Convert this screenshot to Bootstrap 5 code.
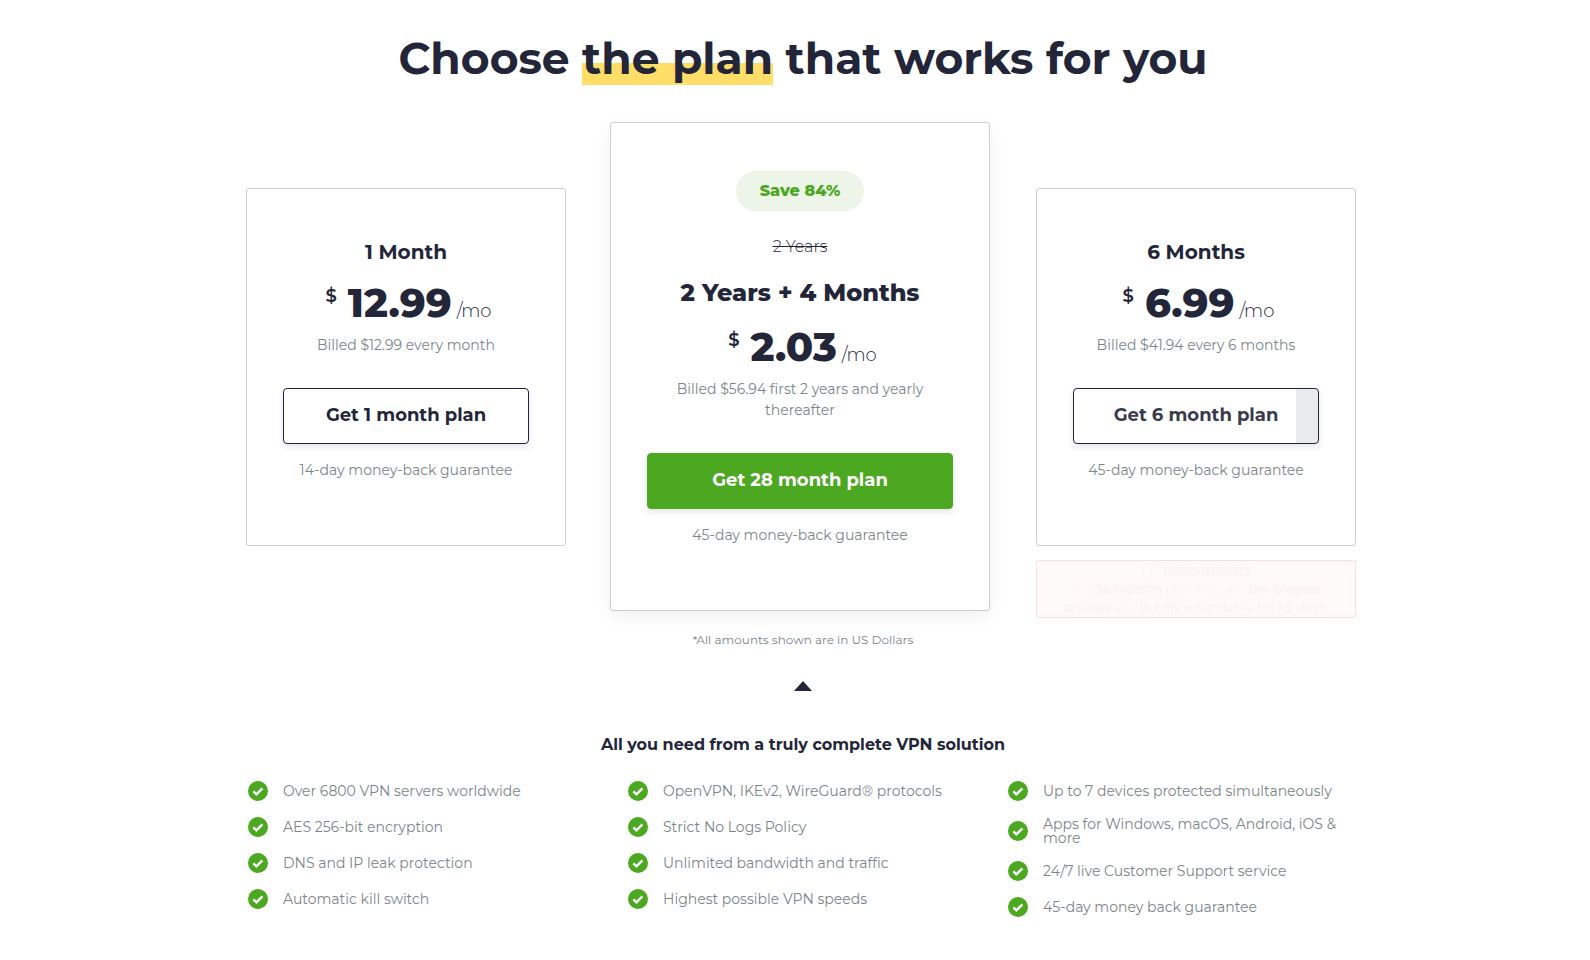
<!DOCTYPE html>
<html lang="en">
<head>
<meta charset="utf-8">
<meta name="viewport" content="width=device-width, initial-scale=1">
<title>Choose the plan that works for you</title>
<link href="https://cdn.jsdelivr.net/npm/bootstrap@5.3.0/dist/css/bootstrap.min.css" rel="stylesheet">
<style>
:root { --ink: #232539; --muted: #7b858a; --green: #4ba820; --line: #cdced2; }
body { font-family: Montserrat, Inter, "Open Sans", sans-serif; color: var(--ink); background: #fff; padding-left: 16px; }
.page-title { font-size: 44px; line-height: 54px; font-weight: 700; padding-top: 31px; margin-bottom: 37px; }
.highlight { display: inline-block; background: linear-gradient(#fede66, #fede66) 0 32px / 100% 22px no-repeat; }
.pricing { max-width: 1140px; padding-left: 13px; padding-right: 17px; }
.plans { column-gap: 44px; }
.plan-col { flex: 0 1 320px; }
.plan-col-side { padding-top: 66px; }
.plan-col-featured { flex-basis: 380px; }
.plan { border: 1px solid var(--line); border-radius: 3px; padding: 48px 36px 64px; text-align: center; }
.plan-featured { box-shadow: 0 6px 18px rgba(0,0,0,.06); }
.plan-name { font-size: 20px; line-height: 30px; font-weight: 700; margin-bottom: 12px; }
.plan-featured .plan-name { font-size: 24px; line-height: 36px; font-weight: 800; }
.plan-price { line-height: 48px; height: 48px; padding-left: 5px; }
.currency { font-size: 18px; line-height: 24px; font-weight: 600; margin: 5px 11px 0 0; align-self: flex-start; }
.amount { font-size: 40px; font-weight: 800; }
.period { font-size: 18px; font-weight: 300; margin-left: 5px; }
.fine { font-size: 14px; line-height: 21px; color: var(--muted); }
.fine-billed { margin: 8px 0 32px; }
.save-pill { background: #edf5e9; color: var(--green); font-size: 16px; line-height: 24px; font-weight: 800; padding: 8px 24px; }
.was { font-size: 16px; line-height: 24px; font-weight: 300; }
.btn-plan { font-size: 18px; line-height: 24px; font-weight: 700; height: 56px; padding-bottom: 8px; border-radius: 4px; box-shadow: 0 3px 6px rgba(0,0,0,.1);
  --bs-btn-color: var(--ink); --bs-btn-border-color: var(--ink); --bs-btn-bg: #fff; }
.btn-featured { --bs-btn-color: #fff; --bs-btn-border-color: var(--green); --bs-btn-bg: var(--green); }
.btn-sweep { --bs-btn-color: #393b4d; background: linear-gradient(90deg, #fff 91%, #e9eaec 91%) 0 0 / 100% 100% no-repeat; }
.notice { border: 1px solid #f9dfdf; border-radius: 3px; background: #fffafa; color: #fcf4f4; font-size: 12px; line-height: 18px; padding: 0 20px; margin-top: 14px; }
.notice-title { font-size: 13px; line-height: 20px; font-weight: 700; }
.currency-note { font-size: 12px; line-height: 18px; color: var(--muted); margin-top: 13px; }
.arrow-up { display: block; margin: 32px auto 41px; color: var(--ink); }
.features-title { font-size: 16px; line-height: 26px; font-weight: 700; margin-bottom: 23px; }
.features { max-width: 1140px; }
.feature-list { padding-left: 15px; padding-right: 15px; margin-bottom: 0; }
.feature { font-size: 14px; line-height: 14px; color: var(--muted); gap: 15px; margin-bottom: 16px; }
.tick { flex: none; color: var(--green); }
</style>
</head>
<body>
<svg class="d-none"><symbol id="tick" viewBox="0 0 20 20"><circle cx="10" cy="10" r="10" fill="currentColor"/><path d="M5.4 10.3l3 3 6-6" fill="none" stroke="#fff" stroke-width="2.4"/></symbol></svg>
<main>
  <h1 class="page-title text-center">Choose <span class="highlight">the plan</span> that works for you</h1>
  <section class="pricing mx-auto">
    <div class="plans d-flex align-items-start">
      <div class="plan-col plan-col-side">
        <article class="plan">
          <h2 class="plan-name">1 Month</h2>
          <div class="plan-price d-flex justify-content-center align-items-baseline"><span class="currency">$</span><span class="amount">12.99</span><span class="period">/mo</span></div>
          <p class="fine fine-billed">Billed $12.99 every month</p>
          <button type="button" class="btn btn-plan w-100">Get 1 month plan</button>
          <p class="fine mt-3 mb-0">14-day money-back guarantee</p>
        </article>
      </div>
      <div class="plan-col plan-col-featured">
        <article class="plan plan-featured">
          <span class="save-pill d-inline-block rounded-pill">Save 84%</span>
          <p class="was mt-4 mb-3"><s>2 Years</s></p>
          <h2 class="plan-name">2 Years + 4 Months</h2>
          <div class="plan-price d-flex justify-content-center align-items-baseline"><span class="currency">$</span><span class="amount">2.03</span><span class="period">/mo</span></div>
          <p class="fine fine-billed">Billed $56.94 first 2 years and yearly thereafter</p>
          <button type="button" class="btn btn-plan btn-featured w-100">Get 28 month plan</button>
          <p class="fine mt-3 mb-0">45-day money-back guarantee</p>
        </article>
      </div>
      <div class="plan-col plan-col-side ms-auto">
        <article class="plan">
          <h2 class="plan-name">6 Months</h2>
          <div class="plan-price d-flex justify-content-center align-items-baseline"><span class="currency">$</span><span class="amount">6.99</span><span class="period">/mo</span></div>
          <p class="fine fine-billed">Billed $41.94 every 6 months</p>
          <button type="button" class="btn btn-plan btn-sweep w-100">Get 6 month plan</button>
          <p class="fine mt-3 mb-0">45-day money-back guarantee</p>
        </article>
        <div class="notice text-center">
          <div class="notice-title d-flex justify-content-center align-items-center gap-1">
            <svg width="17" height="17" viewBox="0 0 16 16" fill="none" stroke="currentColor"><circle cx="8" cy="8" r="7.4"/><path d="M8 7v5M8 4v1.4"/></svg>
            <span>IMPORTANT!</span>
          </div>
          The <strong>26 MONTH</strong> plan includes <strong>the biggest</strong> <strong>savings</strong> and <strong>is fully refundable for 45 days.</strong>
        </div>
      </div>
    </div>
  </section>
  <p class="currency-note text-center mb-0">*All amounts shown are in US Dollars</p>
  <svg class="arrow-up" width="18" height="10" viewBox="0 0 18 10"><path d="M0 10L9 0l9 10z" fill="currentColor"/></svg>
  <section class="features mx-auto">
    <h2 class="features-title text-center">All you need from a truly complete VPN solution</h2>
    <div class="row g-0">
      <ul class="feature-list list-unstyled col-4">
        <li class="feature d-flex align-items-center"><svg class="tick" width="20" height="20"><use href="#tick"/></svg>Over 6800 VPN servers worldwide</li>
        <li class="feature d-flex align-items-center"><svg class="tick" width="20" height="20"><use href="#tick"/></svg>AES 256-bit encryption</li>
        <li class="feature d-flex align-items-center"><svg class="tick" width="20" height="20"><use href="#tick"/></svg>DNS and IP leak protection</li>
        <li class="feature d-flex align-items-center"><svg class="tick" width="20" height="20"><use href="#tick"/></svg>Automatic kill switch</li>
      </ul>
      <ul class="feature-list list-unstyled col-4">
        <li class="feature d-flex align-items-center"><svg class="tick" width="20" height="20"><use href="#tick"/></svg>OpenVPN, IKEv2, WireGuard® protocols</li>
        <li class="feature d-flex align-items-center"><svg class="tick" width="20" height="20"><use href="#tick"/></svg>Strict No Logs Policy</li>
        <li class="feature d-flex align-items-center"><svg class="tick" width="20" height="20"><use href="#tick"/></svg>Unlimited bandwidth and traffic</li>
        <li class="feature d-flex align-items-center"><svg class="tick" width="20" height="20"><use href="#tick"/></svg>Highest possible VPN speeds</li>
      </ul>
      <ul class="feature-list list-unstyled col-4">
        <li class="feature d-flex align-items-center"><svg class="tick" width="20" height="20"><use href="#tick"/></svg>Up to 7 devices protected simultaneously</li>
        <li class="feature d-flex align-items-center"><svg class="tick" width="20" height="20"><use href="#tick"/></svg>Apps for Windows, macOS, Android, iOS &amp; more</li>
        <li class="feature d-flex align-items-center"><svg class="tick" width="20" height="20"><use href="#tick"/></svg>24/7 live Customer Support service</li>
        <li class="feature d-flex align-items-center"><svg class="tick" width="20" height="20"><use href="#tick"/></svg>45-day money back guarantee</li>
      </ul>
    </div>
  </section>
</main>
<script src="https://cdn.jsdelivr.net/npm/bootstrap@5.3.0/dist/js/bootstrap.bundle.min.js"></script>
</body>
</html>
